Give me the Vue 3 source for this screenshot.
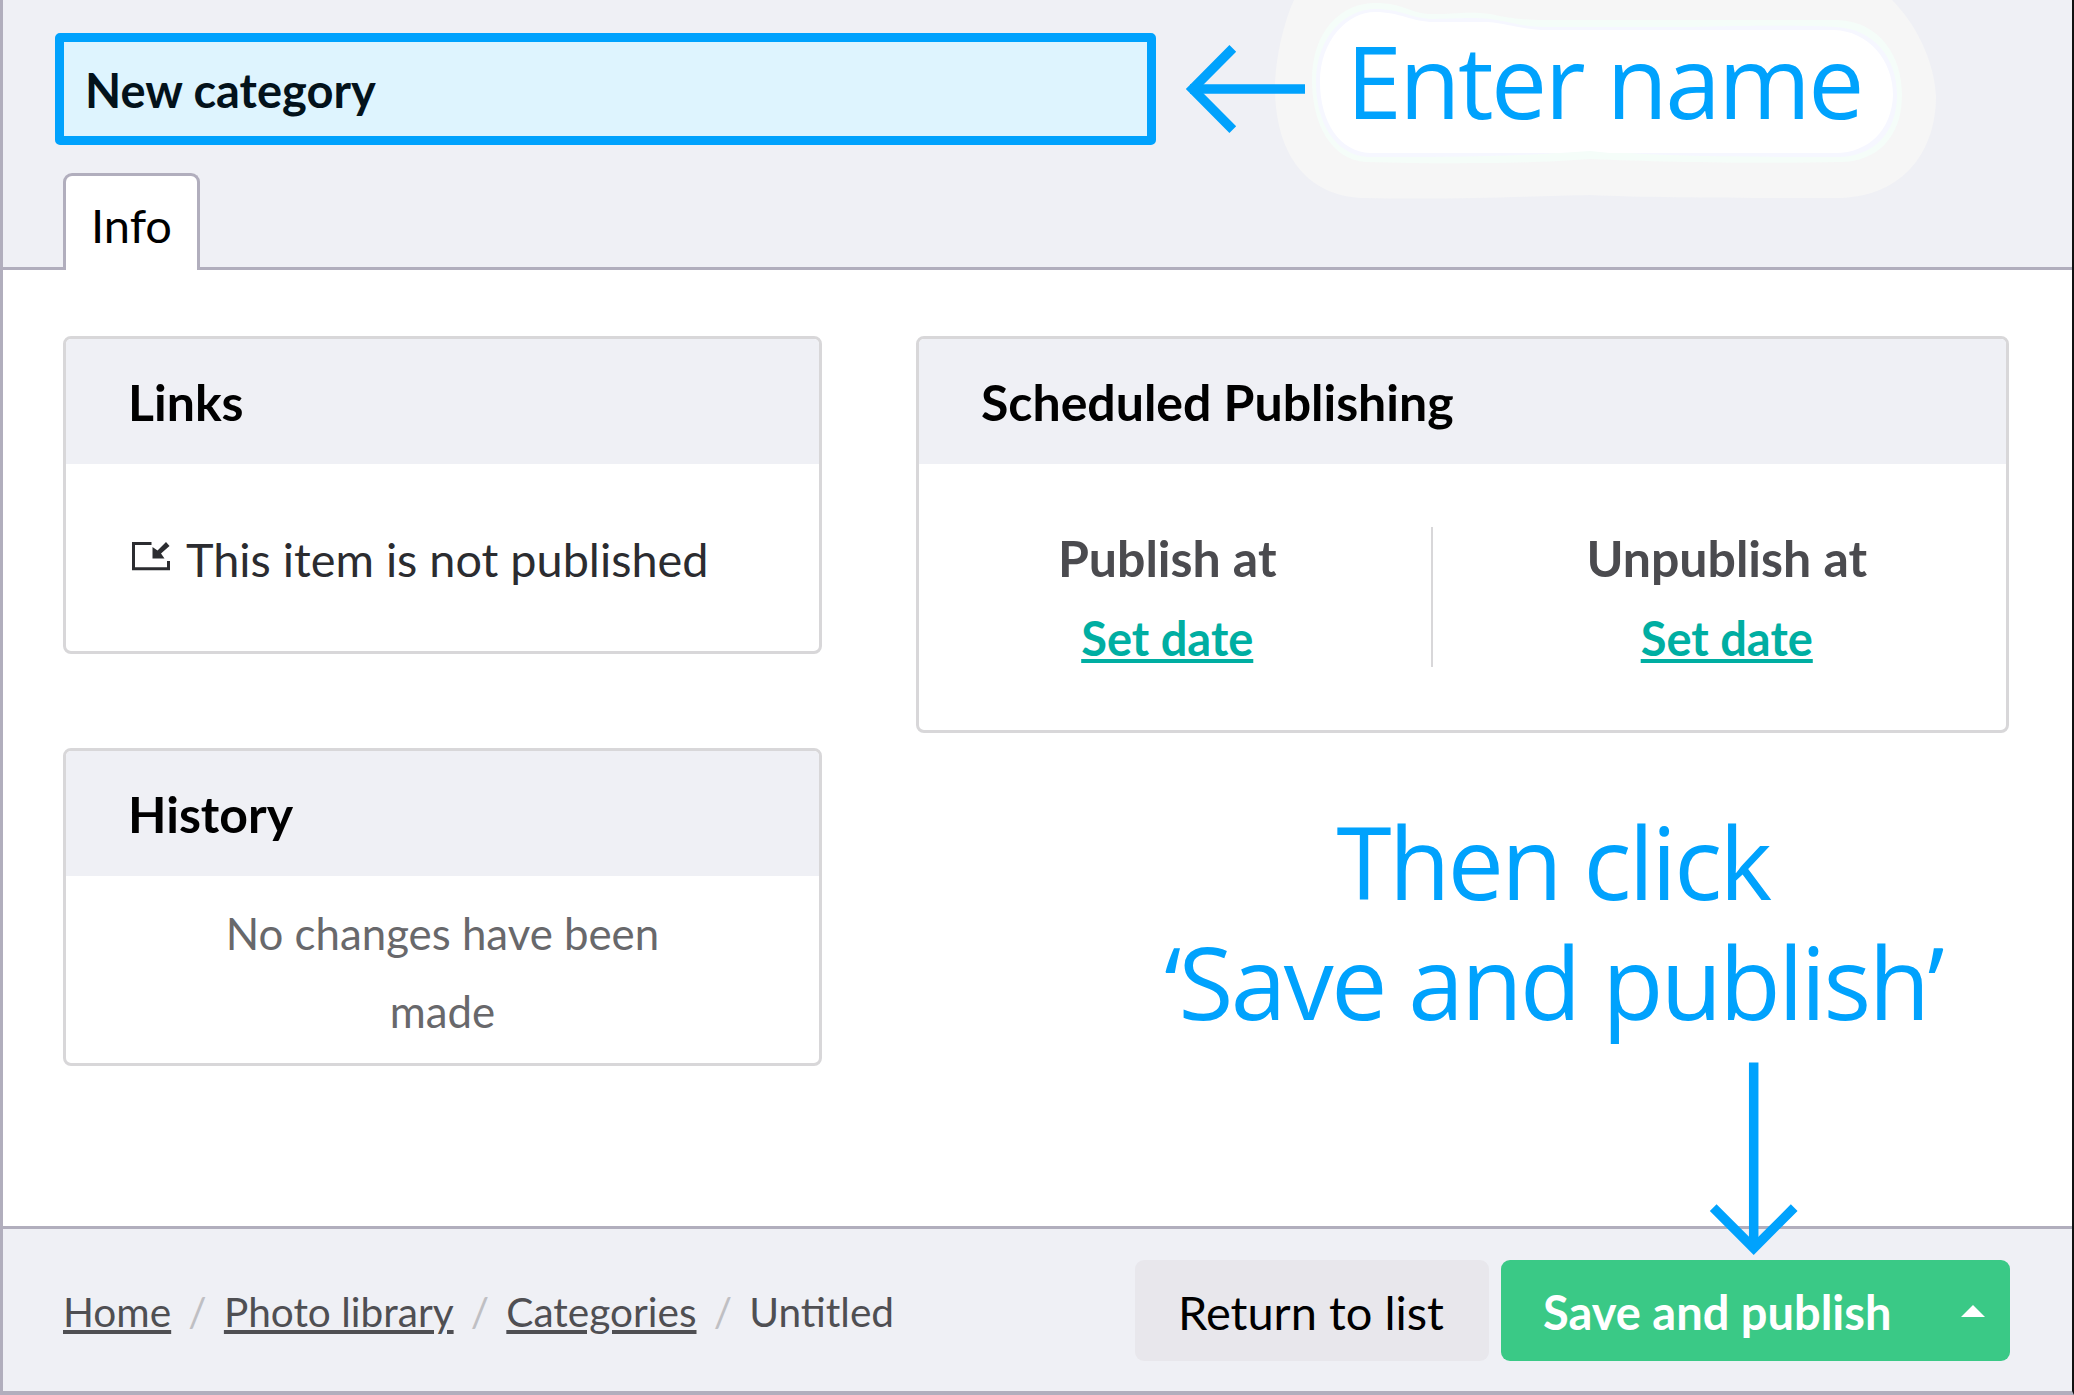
<script setup>
const crumbs = [
  { label: 'Home', link: true },
  { label: 'Photo library', link: true },
  { label: 'Categories', link: true },
  { label: 'Untitled', link: false }
]
const schedule = ['Publish at', 'Unpublish at']
</script>

<template>
  <div class="editor">
    <header class="head">
      <div class="name-field">New category</div>
      <nav class="tabs"><div class="tab">Info</div></nav>
    </header>

    <main class="content">
      <div class="col-left">
        <section class="box links">
          <h2>Links</h2>
          <div class="box-body">
            <svg class="link-icon" width="40" height="32" viewBox="0 0 40 32">
              <path d="M20.5 2.5H2.5V27.8H37.5V20" fill="none" stroke="#2b2c30" stroke-width="3" />
              <path d="M35 1L38.5 5L30 12.5L33.5 17.5H21.5V6L26.5 9.5Z" fill="#2b2c30" />
            </svg>
            <span>This item is not published</span>
          </div>
        </section>
        <section class="box history">
          <h2>History</h2>
          <p>No changes have been<br />made</p>
        </section>
      </div>
      <section class="box scheduled">
        <h2>Scheduled Publishing</h2>
        <div class="dates">
          <div v-for="item in schedule" :key="item" class="date">
            <strong>{{ item }}</strong>
            <a>Set date</a>
          </div>
        </div>
      </section>
    </main>

    <footer class="foot">
      <ul class="crumbs">
        <li v-for="c in crumbs" :key="c.label">
          <span :class="{ link: c.link }">{{ c.label }}</span>
        </li>
      </ul>
      <div class="actions">
        <button class="btn back">Return to list</button>
        <button class="btn save">
          <span>Save and publish</span>
          <i class="caret"></i>
        </button>
      </div>
    </footer>

    <div class="notes">
      <svg class="marks" width="2074" height="1395" viewBox="0 0 2074 1395">
        <path fill="#f6f6f6" d="M1294 0C1284 22 1275 58 1275 90C1276 160 1312 198 1366 198C1450 200 1540 196 1590 195C1650 198 1760 198 1840 198C1905 196 1936 150 1936 96C1934 58 1914 22 1892 0Z" />
        <path fill="#f5fdf9" d="M1312 80C1312 30 1342 3 1375 3C1405 3 1410 14 1432 14C1455 14 1468 11 1490 14C1510 18 1520 20 1545 20H1690C1745 20 1790 20 1838 20C1880 22 1902 56 1902 95C1902 138 1876 162 1840 162C1760 164 1660 162 1590 159C1530 164 1440 164 1366 162C1332 160 1312 125 1312 80Z" />
        <path fill="#f6f7ff" d="M1316 82C1316 36 1346 9 1375 9C1402 9 1412 19 1434 19C1456 19 1468 17 1490 19C1512 22 1522 27 1545 27H1690C1745 26 1790 25 1836 27C1874 29 1897 58 1897 95C1897 134 1872 157 1838 157C1760 157 1660 157 1590 150C1530 157 1440 157 1368 157C1336 155 1316 124 1316 82Z" />
        <path fill="#fff" d="M1320 82C1320 40 1348 12 1375 12C1400 12 1412 22 1434 22H1488C1510 24 1524 30 1548 30H1834C1868 31 1893 60 1893 95C1892 130 1868 153 1836 153H1610L1590 151L1560 153H1370C1340 152 1320 122 1320 82Z" />
        <g fill="none" stroke="#00a2fd" stroke-width="9.5">
          <path d="M1305 89H1190" />
          <path d="M1232.8 48.3L1192.5 89L1232.8 129.7" />
          <path d="M1753.7 1062.5V1249" />
          <path d="M1713.2 1207.7L1753.7 1248.2L1794.2 1207.7" />
        </g>
      </svg>
      <div class="note name-note">Enter name</div>
      <div class="note save-note">Then click<br />‘Save and publish’</div>
    </div>
  </div>
</template>

<style>
body { margin: 0; }
</style>

<style scoped>
.editor {
  position: relative;
  box-sizing: border-box;
  width: 2074px;
  height: 1395px;
  display: flex;
  flex-direction: column;
  overflow: hidden;
  background: #fff;
  border-left: 3px solid #b1aebd;
  border-right: 2px solid #111;
  border-bottom: 4px solid #b1aebd;
  font-family: Lato, "Liberation Sans", sans-serif;
  font-size: 47px;
  color: #000;
}
.head {
  box-sizing: border-box;
  height: 270px;
  flex: none;
  padding: 33px 0 0 52px;
  background: #eff0f5;
  border-bottom: 3px solid #b1aebd;
}
.name-field {
  box-sizing: border-box;
  width: 1101px;
  height: 112px;
  border: 9px solid #00a2fd;
  border-radius: 5px;
  background: #def4fe;
  padding-left: 21px;
  line-height: 97px;
  font-weight: 700;
  color: #03121b;
}
.tabs { display: flex; padding: 28px 0 0 8px; }
.tab {
  box-sizing: border-box;
  width: 137px;
  height: 97px;
  border: 3px solid #b1aebd;
  border-bottom: 0;
  border-radius: 9px 9px 0 0;
  background: #fff;
  padding-left: 25px;
  line-height: 98px;
}
.content {
  flex: 1;
  display: flex;
  align-items: flex-start;
  gap: 94px;
  padding: 66px 0 0 60px;
}
.col-left { display: flex; flex-direction: column; gap: 94px; width: 759px; }
.box {
  box-sizing: border-box;
  border: 3px solid #d8d7d9;
  border-radius: 8px;
  overflow: hidden;
}
.links, .history { height: 318px; }
.scheduled { width: 1093px; height: 397px; }
h2 {
  margin: 0;
  height: 125px;
  padding-left: 62px;
  background: #eff0f5;
  font-size: 50px;
  line-height: 126px;
  font-weight: 700;
}
.box-body {
  display: flex;
  align-items: center;
  height: 190px;
  padding-left: 65px;
  gap: 15px;
  font-size: 46.8px;
  color: #2b2c30;
}
.link-icon { margin-top: -4px; }
.history p {
  margin: 0;
  padding-top: 18px;
  text-align: center;
  font-size: 43.8px;
  line-height: 78px;
  color: #68686b;
}
.dates { display: flex; padding: 63px 62px 0; }
.date {
  flex: 1 1 auto;
  height: 140px;
  display: flex;
  flex-direction: column;
  align-items: center;
  padding-right: 78px;
}
.date + .date { padding: 0 0 0 76px; border-left: 2px solid #d8d7d9; }
.date strong { font-size: 50px; line-height: 62px; color: #4b4b4f; }
.date a {
  margin-top: 12px;
  line-height: 74px;
  font-weight: 700;
  color: #00aea2;
  text-decoration: underline;
}
.foot {
  box-sizing: border-box;
  flex: none;
  height: 165px;
  display: flex;
  align-items: flex-start;
  justify-content: space-between;
  padding: 31px 62px 0 60px;
  background: #eff0f5;
  border-top: 3px solid #b1aebd;
}
.crumbs {
  display: flex;
  margin: 0;
  padding: 0;
  list-style: none;
  font-size: 40.6px;
  line-height: 104px;
  color: #4f4f53;
}
.crumbs li + li::before { content: "/"; margin: 0 17.2px; color: #bfbfc3; }
.link { text-decoration: underline; }
.actions { display: flex; gap: 12px; }
.btn {
  box-sizing: border-box;
  height: 101px;
  border: 0;
  border-radius: 9px;
  padding: 3px 0 0;
  font: 47px/98px Lato, "Liberation Sans", sans-serif;
  display: flex;
  align-items: center;
  justify-content: center;
}
.back { width: 354px; background: #e8e7ec; color: #000; padding-right: 2px; }
.save {
  width: 509px;
  justify-content: space-between;
  padding: 3px 25px 0 42px;
  background: #3ac986;
  color: #fff;
  font-weight: 700;
}
.caret {
  margin-top: -3px;
  border: solid transparent;
  border-width: 0 12.5px 12.5px;
  border-bottom-color: #fff;
}
.notes { position: absolute; top: 0; left: -3px; width: 2074px; height: 1395px; pointer-events: none; }
.marks { position: absolute; top: 0; left: 0; }
.note {
  position: absolute;
  text-align: center;
  white-space: nowrap;
  font-family: "Open Sans", "Noto Sans", sans-serif;
  font-size: 100px;
  line-height: 120px;
  letter-spacing: -2.55px;
  color: #00a2fd;
}
.name-note { left: 1304px; top: 20px; width: 600px; }
.save-note { left: 1103px; top: 801px; width: 900px; }
</style>
